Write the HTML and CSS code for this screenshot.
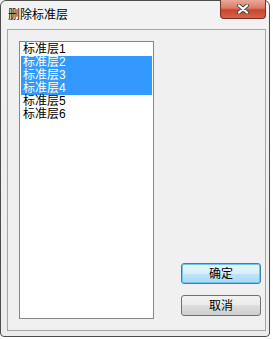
FILE: index.html
```html
<!DOCTYPE html>
<html>
<head>
<meta charset="utf-8">
<link rel="stylesheet" href="styles.css">
</head>
<body>
<div class="window">
  <div class="titlebar">
    <span class="title">删除标准层</span>
    <div class="close">
      <svg width="14" height="10" viewBox="0 0 14 10">
        <path d="M3 1.5 L11 8.5 M11 1.5 L3 8.5" stroke="#4a4a4a" stroke-width="4" stroke-linecap="round" fill="none"/>
        <path d="M3 1.5 L11 8.5 M11 1.5 L3 8.5" stroke="#ffffff" stroke-width="2.2" stroke-linecap="round" fill="none"/>
      </svg>
    </div>
  </div>
  <div class="client">
    <div class="listbox">
      <div class="row">标准层1</div>
      <div class="row sel">标准层2</div>
      <div class="row sel">标准层3</div>
      <div class="row sel">标准层4</div>
      <div class="row">标准层5</div>
      <div class="row">标准层6</div>
    </div>
    <div class="buttons">
      <div class="btn default">确定</div>
      <div class="btn">取消</div>
    </div>
  </div>
</div>
</body>
</html>
```
FILE: styles.css
```css
html, body {
  margin: 0;
  padding: 0;
  background: #ffffff;
}
body {
  font-family: "Liberation Sans", "Noto Sans CJK SC", sans-serif;
  font-size: 12px;
}
.window {
  box-sizing: border-box;
  width: 270px;
  height: 337px;
  border: 1px solid #4d4d4d;
  border-radius: 6px 6px 4px 4px;
  background: linear-gradient(#f2f2f2, #ececec);
  display: flex;
  flex-direction: column;
  padding: 0 3px 5px 6px;
}
.titlebar {
  height: 28px;
  display: flex;
  align-items: flex-start;
  flex: none;
}
.title {
  margin-top: 7px;
  margin-left: 1px;
  color: #000;
  line-height: 14px;
}
.close {
  margin-left: auto;
  margin-top: -1px;
  width: 46px;
  height: 19px;
  box-sizing: border-box;
  border: 1px solid #7a2e22;
  border-top: none;
  border-radius: 0 0 4px 4px;
  background: linear-gradient(#e9a899 0%, #db7b66 45%, #c8452c 55%, #d4634c 100%);
  display: flex;
  align-items: center;
  justify-content: center;
}
.close svg {
  display: block;
}
.client {
  flex: 1;
  border: 1px solid #a5a5a5;
  background: #f0f0f0;
  display: flex;
  padding: 11px 4px 11px 11px;
}
.listbox {
  flex: none;
  box-sizing: border-box;
  width: 135px;
  height: 278px;
  border: 1px solid #828790;
  background: #ffffff;
  padding: 1px;
}
.row {
  height: 13px;
  line-height: 13px;
  padding-left: 2px;
  color: #000;
  white-space: nowrap;
}
.row.sel {
  background: #3399ff;
  color: #ffffff;
}
.buttons {
  flex: none;
  margin-left: 27px;
  display: flex;
  flex-direction: column;
  justify-content: flex-end;
  gap: 11px;
  padding-bottom: 3px;
}
.btn {
  box-sizing: border-box;
  width: 80px;
  height: 21px;
  border: 1px solid #707070;
  border-radius: 3px;
  background: linear-gradient(#f2f2f2 0%, #ebebeb 50%, #dddddd 50%, #cfcfcf 100%);
  display: flex;
  align-items: center;
  justify-content: center;
  color: #000;
  line-height: 14px;
}
.btn.default {
  border-color: #3c7fb1;
  background: linear-gradient(#e5f4fc 0%, #d9effc 50%, #bee6fd 50%, #a7d9f5 100%);
  box-shadow: inset 0 0 0 1px #6fc5ee;
}
```
